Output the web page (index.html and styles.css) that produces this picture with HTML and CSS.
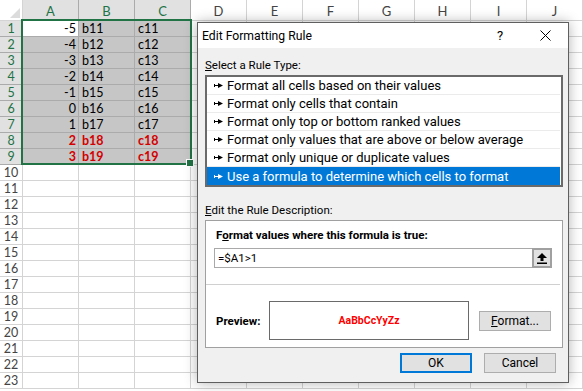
FILE: index.html
```html
<!DOCTYPE html>
<html lang="en">
<head>
    <meta charset="UTF-8">
    <title>Edit Formatting Rule</title>
    <link rel="stylesheet" href="styles.css">
</head>
<body>

    <div class="sheet">
        <div class="corner"><svg width="10" height="10" viewBox="0 0 10 10"><path d="M10 0 L10 10 L0 10 Z" fill="#dcdcdc"/></svg></div>
        <div class="ch sel">A</div>
        <div class="ch sel">B</div>
        <div class="ch sel">C</div>
        <div class="ch">D</div>
        <div class="ch">E</div>
        <div class="ch">F</div>
        <div class="ch">G</div>
        <div class="ch">H</div>
        <div class="ch">I</div>
        <div class="ch">J</div>

        <div class="rh sel">1</div><div class="cell num active">-5</div><div class="cell">b11</div><div class="cell">c11</div>
        <div class="rh sel">2</div><div class="cell num">-4</div><div class="cell">b12</div><div class="cell">c12</div>
        <div class="rh sel">3</div><div class="cell num">-3</div><div class="cell">b13</div><div class="cell">c13</div>
        <div class="rh sel">4</div><div class="cell num">-2</div><div class="cell">b14</div><div class="cell">c14</div>
        <div class="rh sel">5</div><div class="cell num">-1</div><div class="cell">b15</div><div class="cell">c15</div>
        <div class="rh sel">6</div><div class="cell num">0</div><div class="cell">b16</div><div class="cell">c16</div>
        <div class="rh sel">7</div><div class="cell num">1</div><div class="cell">b17</div><div class="cell">c17</div>
        <div class="rh sel">8</div><div class="cell num hit">2</div><div class="cell hit">b18</div><div class="cell hit">c18</div>
        <div class="rh sel">9</div><div class="cell num hit">3</div><div class="cell hit">b19</div><div class="cell hit">c19</div>
        <div class="rh">10</div>
        <div class="rh">11</div>
        <div class="rh">12</div>
        <div class="rh">13</div>
        <div class="rh">14</div>
        <div class="rh">15</div>
        <div class="rh">16</div>
        <div class="rh">17</div>
        <div class="rh">18</div>
        <div class="rh">19</div>
        <div class="rh">20</div>
        <div class="rh">21</div>
        <div class="rh">22</div>
        <div class="rh">23</div>

        <div class="selection"><span class="handle"></span></div>
    </div>

    <div class="dialog">
        <div class="titlebar">
            <span class="title">Edit Formatting Rule</span>
            <span class="tb-btn help">?</span>
            <span class="tb-btn close">
                <svg width="11" height="11" viewBox="0 0 11 11"><path d="M0.5 0.5 L10.5 10.5 M10.5 0.5 L0.5 10.5" stroke="#000" stroke-width="1"/></svg>
            </span>
        </div>

        <div class="dlg-body">
            <div class="label first"><u>S</u>elect a Rule Type:</div>
            <ul class="rule-list">
                <li><svg class="bullet" width="9" height="5" viewBox="0 0 9 5"><path d="M0 1h1v3H0z M1 2h4v1H1z M4 0 L9 2.5 L4 5 Z" fill="currentColor"/></svg>Format all cells based on their values</li>
                <li><svg class="bullet" width="9" height="5" viewBox="0 0 9 5"><path d="M0 1h1v3H0z M1 2h4v1H1z M4 0 L9 2.5 L4 5 Z" fill="currentColor"/></svg>Format only cells that contain</li>
                <li><svg class="bullet" width="9" height="5" viewBox="0 0 9 5"><path d="M0 1h1v3H0z M1 2h4v1H1z M4 0 L9 2.5 L4 5 Z" fill="currentColor"/></svg>Format only top or bottom ranked values</li>
                <li><svg class="bullet" width="9" height="5" viewBox="0 0 9 5"><path d="M0 1h1v3H0z M1 2h4v1H1z M4 0 L9 2.5 L4 5 Z" fill="currentColor"/></svg>Format only values that are above or below average</li>
                <li><svg class="bullet" width="9" height="5" viewBox="0 0 9 5"><path d="M0 1h1v3H0z M1 2h4v1H1z M4 0 L9 2.5 L4 5 Z" fill="currentColor"/></svg>Format only unique or duplicate values</li>
                <li class="selected"><svg class="bullet" width="9" height="5" viewBox="0 0 9 5"><path d="M0 1h1v3H0z M1 2h4v1H1z M4 0 L9 2.5 L4 5 Z" fill="currentColor"/></svg>Use a formula to determine which cells to format</li>
            </ul>

            <div class="label second"><u>E</u>dit the Rule Description:</div>
            <div class="panel">
                <div class="panel-head">F<u>o</u>rmat values where this formula is true:</div>
                <div class="formula">
                    <span class="formula-text">=$A1&gt;1</span>
                    <span class="collapse-btn">
                        <svg width="10" height="11" viewBox="0 0 10 11"><path d="M5 0 L10 5 L6.5 5 L6.5 8 L3.5 8 L3.5 5 L0 5 Z M0 9.5h10v1.5H0z" fill="#000"/></svg>
                    </span>
                </div>
                <div class="divider"></div>
                <div class="preview-row">
                    <span class="preview-label">Preview:</span>
                    <div class="preview-box">AaBbCcYyZz</div>
                    <button class="btn format-btn"><u>F</u>ormat...</button>
                </div>
            </div>

            <div class="actions">
                <button class="btn ok">OK</button>
                <button class="btn">Cancel</button>
            </div>
        </div>
    </div>

</body>
</html>
```

FILE: styles.css
```css
body {
    margin: 0;
    background: #fff;
    width: 583px;
    height: 391px;
    overflow: hidden;
    position: relative;
}
.sheet {
    display: grid;
    grid-template-columns: 23px repeat(10, 56px);
    grid-template-rows: 21px repeat(23, 16px);
    position: relative;
    font-family: Lato, "Liberation Sans", sans-serif;
    font-size: 12px;
    background-color: #fff;
    background-image:
        linear-gradient(to right, transparent 55px, #d4d4d4 55px),
        linear-gradient(to bottom, transparent 15px, #d4d4d4 15px);
    background-size: 56px 100%, 100% 16px;
    background-position: 23px 0, 0 21px;
}
.corner {
    background: #fff;
    border-right: 1px solid #d4d4d4;
    border-bottom: 1px solid #d4d4d4;
    display: flex;
    align-items: flex-end;
    justify-content: flex-end;
    padding: 0 2px 2px 0;
}
.ch, .rh {
    box-sizing: border-box;
    background: #fff;
    color: #444;
    display: flex;
    align-items: center;
    justify-content: center;
    border-right: 1px solid #d4d4d4;
    border-bottom: 1px solid #d4d4d4;
}
.ch {
    font-size: 13px;
    padding-top: 1px;
}
.rh {
    grid-column: 1;
    font-size: 12.5px;
    line-height: 15px;
}
.ch.sel, .rh.sel {
    background: #e1e1e1;
    color: #217346;
    border-color: #ababab;
}
.cell {
    box-sizing: border-box;
    background: #c6c6c6;
    border-right: 1px solid #ababab;
    border-bottom: 1px solid #ababab;
    padding: 0 3px;
    font-size: 12.5px;
    line-height: 15px;
    color: #000;
    white-space: nowrap;
}
.cell.num {
    text-align: right;
    padding-right: 2px;
}
.cell.active {
    background: #fff;
}
.cell.hit {
    color: #d40000;
    font-weight: bold;
}
.selection {
    position: absolute;
    grid-row: 2 / 11;
    grid-column: 2 / 5;
    top: -2px;
    left: -2px;
    right: -1px;
    bottom: 0;
    border: 2px solid #217346;
    pointer-events: none;
}
.handle {
    position: absolute;
    right: -4px;
    bottom: -4px;
    width: 6px;
    height: 6px;
    background: #217346;
    border: 1px solid #fff;
}

/* dialog */
.dialog {
    position: absolute;
    left: 197px;
    top: 22px;
    width: 372px;
    height: 361px;
    box-sizing: border-box;
    border: 1px solid #5f5f5f;
    box-shadow: 0 0 12px rgba(0, 0, 0, 0.3);
    display: flex;
    flex-direction: column;
    font-family: Roboto, "Noto Sans", sans-serif;
    font-size: 11.5px;
    color: #000;
}
.titlebar {
    height: 25px;
    background: #fff;
    display: flex;
    align-items: center;
    padding-left: 4px;
}
.title {
    flex: 1;
    font-size: 12.2px;
}
.tb-btn {
    height: 25px;
    display: flex;
    align-items: center;
    justify-content: center;
}
.help {
    width: 44px;
    font-size: 13px;
}
.close {
    width: 46px;
}
.dlg-body {
    flex: 1;
    background: #f0f0f0;
    padding: 0 5px 0 7px;
    display: flex;
    flex-direction: column;
}
.label {
    line-height: 14px;
}
.label.first {
    margin-top: 10px;
}
.label.second {
    margin-top: 16px;
}
.rule-list {
    list-style: none;
    margin: 3px 0 0 0;
    padding: 0;
    height: 112px;
    box-sizing: border-box;
    border: 2px solid #6a6a6a;
    background: #fff;
    font-size: 13px;
}
.rule-list li {
    height: 18px;
    box-sizing: border-box;
    border-bottom: 1px solid #ebebeb;
    margin-right: 1px;
    display: flex;
    align-items: center;
    padding-left: 7px;
    white-space: nowrap;
}
.rule-list li.selected {
    background: #0078d7;
    color: #fff;
    border-bottom: none;
}
.bullet {
    margin-right: 4px;
}
.panel {
    margin-top: 3px;
    height: 128px;
    box-sizing: border-box;
    border: 1px solid #a0a0a0;
    background: #fff;
    display: flex;
    flex-direction: column;
}
.panel-head {
    font-weight: bold;
    line-height: 14px;
    padding: 7px 0 0 10px;
}
.formula {
    margin: 6px 0 0 8px;
    width: 338px;
    height: 20px;
    box-sizing: border-box;
    border: 1px solid #a9a9a9;
    display: flex;
    align-items: center;
}
.formula-text {
    flex: 1;
    padding-left: 3px;
}
.collapse-btn {
    width: 20px;
    height: 20px;
    margin-right: -1px;
    box-sizing: border-box;
    border: 2px solid #a0a0a0;
    background: #e1e1e1;
    display: flex;
    align-items: center;
    justify-content: center;
}
.divider {
    margin: 16px 2px 0 0;
    border-top: 1px solid #d0d0d0;
}
.preview-row {
    margin-top: 16px;
    display: flex;
    align-items: center;
    padding-left: 10px;
}
.preview-label {
    width: 53px;
    font-weight: bold;
}
.preview-box {
    width: 200px;
    height: 39px;
    box-sizing: border-box;
    border: 1px solid #6a6a6a;
    display: flex;
    align-items: center;
    justify-content: center;
    color: #ff0000;
    font-weight: bold;
    font-size: 10.5px;
}
.btn {
    font-family: inherit;
    font-size: 12px;
    color: #000;
    width: 72px;
    height: 20px;
    box-sizing: border-box;
    background: #e1e1e1;
    border: 1px solid #adadad;
    padding: 0;
}
.format-btn {
    margin-left: 10px;
}
.actions {
    margin-top: 5px;
    display: flex;
    justify-content: flex-end;
    gap: 12px;
    padding-right: 7px;
}
.btn.ok {
    border: 2px solid #0078d7;
}
```
